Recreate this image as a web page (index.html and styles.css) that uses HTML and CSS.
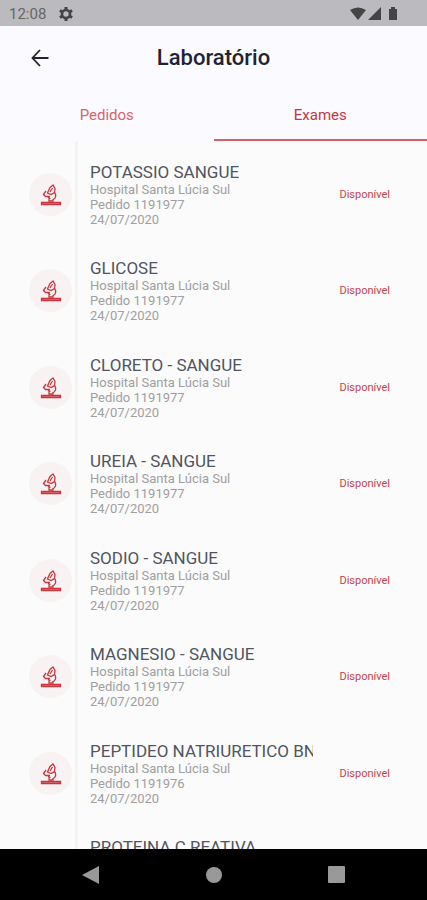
FILE: index.html
```
<!DOCTYPE html>
<html lang="pt-BR">
<head>
    <meta charset="UTF-8">
    <meta name="viewport" content="width=device-width, initial-scale=1.0">
    <title>Laboratório</title>
    <link rel="stylesheet" href="styles.css">
</head>
<body>
    <svg class="sprite" aria-hidden="true">
        <symbol id="microscope" viewBox="0 0 22 22">
            <path d="M10 3.500L13 1L15 4.500L14.500 8.500L11 10.500L7.500 9Z"/>
            <path d="M12.500 4L10 8M6 7L3.500 10.500L5.500 12.500H10M14.500 8.500C16.500 10.500 16 14 13.500 15.500M8 13.500L10.500 14.500M9 14.500V17H13V15"/>
            <path fill="#e08a8e" d="M1.500 20.500V18.500H20.500V20.500Z"/>
        </symbol>
    </svg>

    <div class="status-bar">
        <span class="clock">12:08</span>
        <svg class="gear" viewBox="0 0 16 16" width="16" height="16">
            <circle cx="8" cy="8" r="4" fill="none" stroke="#444" stroke-width="2.600"/>
            <path stroke="#444" stroke-width="3" d="M8 1V3.500M8 12.500V15M1.900 4.500L4.100 5.800M11.900 10.200L14.100 11.500M1.900 11.500L4.100 10.200M11.900 5.800L14.100 4.500"/>
        </svg>
        <svg class="signals" viewBox="0 0 48 14" width="48" height="14" fill="#444">
            <path d="M0 3Q8 -2 16 3L8 13Z"/>
            <path d="M31 0V13H18Z"/>
            <path d="M39 2H41V0H45V2H47V13H39Z"/>
        </svg>
    </div>

    <header class="header">
        <button class="back" aria-label="Voltar">
            <svg viewBox="0 0 18 18" width="18" height="18"><path d="M9 1L1.500 9L9 17M1.500 9H17.500"/></svg>
        </button>
        <h1>Laboratório</h1>
    </header>

    <nav class="tabs">
        <a href="#pedidos">Pedidos</a>
        <a href="#exames" class="active">Exames</a>
    </nav>

    <main class="exams">
        <div class="exam">
            <div class="icon"><svg><use href="#microscope"/></svg></div>
            <div class="info">
                <h2>POTASSIO SANGUE</h2>
                <p>Hospital Santa Lúcia Sul</p>
                <p>Pedido 1191977</p>
                <p>24/07/2020</p>
            </div>
            <span class="status">Disponível</span>
        </div>
        <div class="exam">
            <div class="icon"><svg><use href="#microscope"/></svg></div>
            <div class="info">
                <h2>GLICOSE</h2>
                <p>Hospital Santa Lúcia Sul</p>
                <p>Pedido 1191977</p>
                <p>24/07/2020</p>
            </div>
            <span class="status">Disponível</span>
        </div>
        <div class="exam">
            <div class="icon"><svg><use href="#microscope"/></svg></div>
            <div class="info">
                <h2>CLORETO - SANGUE</h2>
                <p>Hospital Santa Lúcia Sul</p>
                <p>Pedido 1191977</p>
                <p>24/07/2020</p>
            </div>
            <span class="status">Disponível</span>
        </div>
        <div class="exam">
            <div class="icon"><svg><use href="#microscope"/></svg></div>
            <div class="info">
                <h2>UREIA - SANGUE</h2>
                <p>Hospital Santa Lúcia Sul</p>
                <p>Pedido 1191977</p>
                <p>24/07/2020</p>
            </div>
            <span class="status">Disponível</span>
        </div>
        <div class="exam">
            <div class="icon"><svg><use href="#microscope"/></svg></div>
            <div class="info">
                <h2>SODIO - SANGUE</h2>
                <p>Hospital Santa Lúcia Sul</p>
                <p>Pedido 1191977</p>
                <p>24/07/2020</p>
            </div>
            <span class="status">Disponível</span>
        </div>
        <div class="exam">
            <div class="icon"><svg><use href="#microscope"/></svg></div>
            <div class="info">
                <h2>MAGNESIO - SANGUE</h2>
                <p>Hospital Santa Lúcia Sul</p>
                <p>Pedido 1191977</p>
                <p>24/07/2020</p>
            </div>
            <span class="status">Disponível</span>
        </div>
        <div class="exam">
            <div class="icon"><svg><use href="#microscope"/></svg></div>
            <div class="info">
                <h2>PEPTIDEO NATRIURETICO BNP</h2>
                <p>Hospital Santa Lúcia Sul</p>
                <p>Pedido 1191976</p>
                <p>24/07/2020</p>
            </div>
            <span class="status">Disponível</span>
        </div>
        <div class="exam">
            <div class="info last">
                <h2>PROTEINA C REATIVA</h2>
            </div>
        </div>
    </main>

    <div class="nav-bar">
        <button aria-label="Voltar"><svg viewBox="0 0 18 18" width="18" height="18"><path d="M17 0V18L0 9Z"/></svg></button>
        <button aria-label="Início"><svg viewBox="0 0 18 18" width="18" height="18"><circle cx="9" cy="9" r="8"/></svg></button>
        <button aria-label="Recentes"><svg viewBox="0 0 18 18" width="18" height="18"><rect x="0" y="0" width="17" height="17" rx="1"/></svg></button>
    </div>
</body>
</html>
```
FILE: styles.css
```
* {
    box-sizing: border-box;
    margin: 0;
    padding: 0;
}
body {
    font-family: Roboto, sans-serif;
    background-color: #fbfbfb;
    display: flex;
    flex-direction: column;
    height: 100vh;
    overflow: hidden;
}
button {
    background: none;
    border: none;
    cursor: pointer;
}
svg {
    display: block;
}
.sprite {
    display: none;
}
.status-bar {
    display: flex;
    align-items: center;
    flex: none;
    height: 26px;
    padding: 2px 29px 0 9px;
    background-color: #bababf;
    color: #666;
    font-size: 15px;
}
.gear {
    margin-left: 12px;
}
.signals {
    margin-left: auto;
}
.header {
    display: grid;
    grid-template-columns: 1fr auto 1fr;
    align-items: center;
    flex: none;
    height: 64px;
    padding: 0 31px;
    background-color: #fafaff;
}
.header h1 {
    font-size: 22px;
    font-weight: 500;
    line-height: 24px;
    color: #1f2333;
}
.back {
    justify-self: start;
}
.back path {
    fill: none;
    stroke: #222;
    stroke-width: 1.8;
}
.tabs {
    display: flex;
    flex: none;
    background-color: #fafaff;
}
.tabs a {
    flex: 1;
    height: 51px;
    font-size: 15px;
    line-height: 50px;
    text-align: center;
    text-decoration: none;
    color: #d9636b;
    border-bottom: 2px solid transparent;
}
.tabs .active {
    color: #c4373f;
    border-bottom-color: #d4616a;
}
.exams {
    flex: 1;
    min-height: 0;
    overflow: hidden;
    padding-top: 5px;
    background: linear-gradient(#f4f4f4, #f4f4f4) 75px 0 / 3px 100% no-repeat;
}
.exam {
    display: flex;
    align-items: center;
    padding: 16px 37px 16px 29px;
}
.exam:nth-child(odd) {
    padding-bottom: 15px;
}
.icon {
    display: flex;
    align-items: center;
    justify-content: center;
    flex: none;
    width: 43px;
    height: 43px;
    border-radius: 50%;
    background-color: #f8f2f2;
}
.icon svg {
    width: 22px;
    height: 22px;
    fill: none;
    stroke: #c4373f;
    stroke-width: 1.3;
}
.info {
    flex: 1;
    min-width: 0;
    margin-left: 18px;
    margin-right: 26px;
}
.info.last {
    margin-left: 61px;
}
.info h2 {
    overflow: hidden;
    white-space: nowrap;
    font-size: 17px;
    font-weight: 400;
    line-height: 20px;
    color: #50555f;
}
.info p {
    font-size: 13px;
    line-height: 15px;
    color: #a0a0a0;
}
.status {
    font-size: 11px;
    color: #c4444c;
}
.nav-bar {
    display: flex;
    align-items: center;
    justify-content: center;
    gap: 105px;
    flex: none;
    height: 51px;
    background-color: #000;
}
.nav-bar svg {
    fill: #999;
}
```
